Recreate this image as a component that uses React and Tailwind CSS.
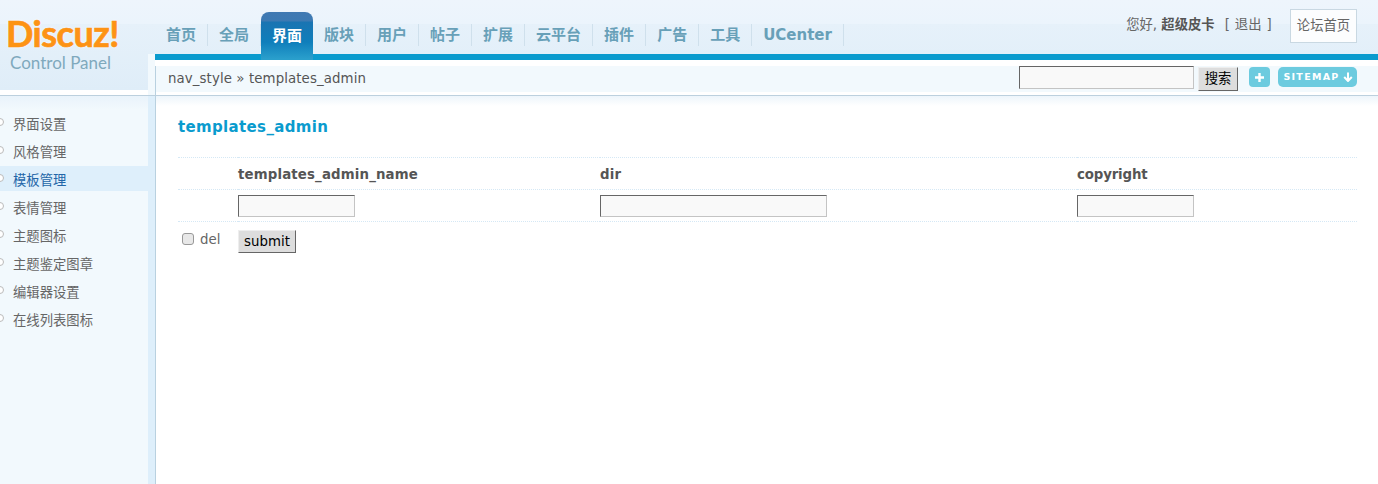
const cjk = "font-['DejaVu_Sans','Noto_Sans_CJK_SC',sans-serif]";

const tabs = ["首页", "全局", "界面", "版块", "用户", "帖子", "扩展", "云平台", "插件", "广告", "工具", "UCenter"];
const menu = ["界面设置", "风格管理", "模板管理", "表情管理", "主题图标", "主题鉴定图章", "编辑器设置", "在线列表图标"];

const TextInput = ({ className }) => (
  <input
    type="text"
    className={`block h-[22px] bg-[#f9f9f9] border border-t-[#666] border-l-[#666] border-r-[#c4c4c4] border-b-[#c4c4c4] ${className}`}
  />
);

const GrayButton = ({ children, className }) => (
  <button className={`block bg-[#ddd] text-[13.33px] text-black border border-t-[#eee] border-l-[#eee] border-r-[#666] border-b-[#666] ${className}`}>
    {children}
  </button>
);

const Logo = () => (
  <div className="h-[90px] pl-[6px] pt-[13px]">
    <div className="font-['Lato',sans-serif] font-bold text-[36px] leading-[40px] text-[#fd9315] [-webkit-text-stroke:0.7px_#fd9315] [text-shadow:0_0_3px_#fff] tracking-[-0.5px]">
      Discuz!
    </div>
    <div className="font-['Lato',sans-serif] pl-[4px] mt-[1px] text-[17px] leading-[17px] text-[#7fa9bd]">Control Panel</div>
  </div>
);

const Tabs = () => (
  <ul className="flex h-[54px]">
    {tabs.map((t) =>
      t === "界面" ? (
        <li
          key={t}
          className="mt-[12px] h-[48px] w-[52px] rounded-t-[8px] bg-[linear-gradient(#4079b2_0,#3d7ab3_9px,#1a74b2_10px,#0f7ebb_30px,#2a9fcc_47px)] pt-[13px] text-center text-[15px] leading-[22px] font-bold text-white"
        >
          {t}
        </li>
      ) : (
        <li key={t} className="mt-[24px] h-[22px] border-r border-r-[#cfe0ec] px-[11px] text-[15px] leading-[23px] font-bold text-[#68a0b8]">
          {t}
        </li>
      ),
    )}
  </ul>
);

const UserBox = () => (
  <div className="ml-auto flex items-start pr-[21px]">
    <p className="mt-[15px] text-[13.33px] leading-[20px] text-[#666]">
      您好, <b className="text-[#555]">超级皮卡</b>
      <span className="ml-[10px] tracking-[0.3px]">[ 退出 ]</span>
    </p>
    <a className="ml-[18px] mt-[9px] h-[34px] w-[67px] border border-[#c9d8e2] bg-[#fcfdfe] text-center text-[13.33px] leading-[32px] text-[#666]">
      论坛首页
    </a>
  </div>
);

const SubNav = () => (
  <div className="mt-[6px] flex h-[26px] items-start bg-[#f2f9fd] pl-[12px] pr-[21px]">
    <p className="text-[13.33px] leading-[25px] tracking-[0.1px] text-[#555]">nav_style » templates_admin</p>
    <div className="ml-auto flex items-start">
      <TextInput className="!h-[23px] w-[175px]" />
      <GrayButton className="ml-[4px] mt-[1px] h-[24px] w-[40px]">搜索</GrayButton>
      <span className="ml-[11px] mt-[1px] flex h-[20px] w-[21px] items-center justify-center rounded-[4px] bg-[#6ccbdf]">
        <svg width="11" height="11" viewBox="0 0 11 11">
          <path d="M5.5 1v9M1 5.5h9" stroke="#fff" strokeWidth="2.4" />
        </svg>
      </span>
      <span className="ml-[8px] mt-[1px] flex h-[20px] w-[79px] items-center justify-center gap-[3px] rounded-[5px] bg-[#6ccbdf] pl-[1px] text-[9.5px] leading-none font-bold tracking-[1.3px] text-white">
        SITEMAP
        <svg width="10" height="10" viewBox="0 0 10 10">
          <path d="M5 0.5v8M1.2 5l3.8 4L8.8 5" fill="none" stroke="#fff" strokeWidth="2" />
        </svg>
      </span>
    </div>
  </div>
);

const Sidebar = () => (
  <div className="flex w-[155px] shrink-0 border-r-[7px] border-r-[#deeffb] bg-[linear-gradient(#e9f3fb,#f2f9fd_14px)] pt-[14px]">
    <ul className="w-full">
      {menu.map((m) => (
        <li
          key={m}
          className={`mb-[3px] flex h-[25px] items-center pt-[4px] text-[13.33px] ${
            m === "模板管理" ? "bg-[#deeffb] text-[#2366a8]" : "text-[#666]"
          }`}
        >
          <span className="-ml-[4px] -mt-[6px] mr-[9px] h-[8px] w-[8px] shrink-0 rounded-full border border-[#bbb] bg-white" />
          {m}
        </li>
      ))}
    </ul>
  </div>
);

const cell = "border-b border-dotted border-b-[#d5e8f5] p-0";

const Content = () => (
  <main className="flex-1 border-l border-l-[#b9d1e0] bg-[linear-gradient(#edf5fb,#fff_10px)] pl-[22px] pr-[21px] pt-[21px]">
    <h1 className="text-[15px] leading-[20px] font-bold tracking-[0.35px] text-[#0a9bce]">templates_admin</h1>
    <table className="mt-[20px] w-full table-fixed border-t border-dotted border-t-[#d5e8f5] text-[13.33px]">
      <colgroup>
        <col className="w-[60px]" />
        <col className="w-[362px]" />
        <col className="w-[477px]" />
        <col />
      </colgroup>
      <tbody>
        <tr className="h-[32px] text-left font-bold tracking-[0.15px] text-[#555]">
          <td className={cell} />
          <td className={`${cell} pt-[2px]`}>templates_admin_name</td>
          <td className={`${cell} pt-[2px]`}>dir</td>
          <td className={`${cell} pt-[2px] tracking-[-0.15px]`}>copyright</td>
        </tr>
        <tr className="h-[32px]">
          <td className={cell} />
          <td className={cell}>
            <TextInput className="w-[117px]" />
          </td>
          <td className={cell}>
            <TextInput className="w-[227px]" />
          </td>
          <td className={cell}>
            <TextInput className="w-[117px]" />
          </td>
        </tr>
        <tr>
          <td className="p-0 pt-[4px]">
            <label className="flex items-center pl-[4px] text-[#666]">
              <input type="checkbox" className="h-[12px] w-[12px] appearance-none rounded-[3px] border border-[#999] bg-[#e8e8e8]" />
              <span className="ml-[6px]">del</span>
            </label>
          </td>
          <td className="p-0 pt-[8px]" colSpan={3}>
            <GrayButton className="h-[23px] w-[58px]">submit</GrayButton>
          </td>
        </tr>
      </tbody>
    </table>
  </main>
);

export default function App() {
  return (
    <div className={`flex h-screen flex-col overflow-hidden bg-white ${cjk}`}>
      <header className="flex h-[96px] shrink-0 border-b border-b-[#bcd0de] bg-[linear-gradient(#eef5fc_0,#ebf4fc_24px,#e6f1fa_24px,#dfedf8_90px,#fff_90px)]">
        <div className="w-[148px] shrink-0">
          <Logo />
        </div>
        <div className="w-[7px] shrink-0">
          <div className="mt-[54px] h-[41px] bg-[#f2f9fd]" />
        </div>
        <div className="flex-1 bg-[linear-gradient(transparent_54px,#fff_54px)]">
          <div className="flex h-[54px]">
            <Tabs />
            <UserBox />
          </div>
          <div className="h-[6px] bg-[#0a9bce]" />
          <div className="border-l border-l-[#b9d1e0]">
            <SubNav />
            <div className="h-[3px]" />
          </div>
        </div>
      </header>
      <div className="flex flex-1">
        <Sidebar />
        <Content />
      </div>
    </div>
  );
}
